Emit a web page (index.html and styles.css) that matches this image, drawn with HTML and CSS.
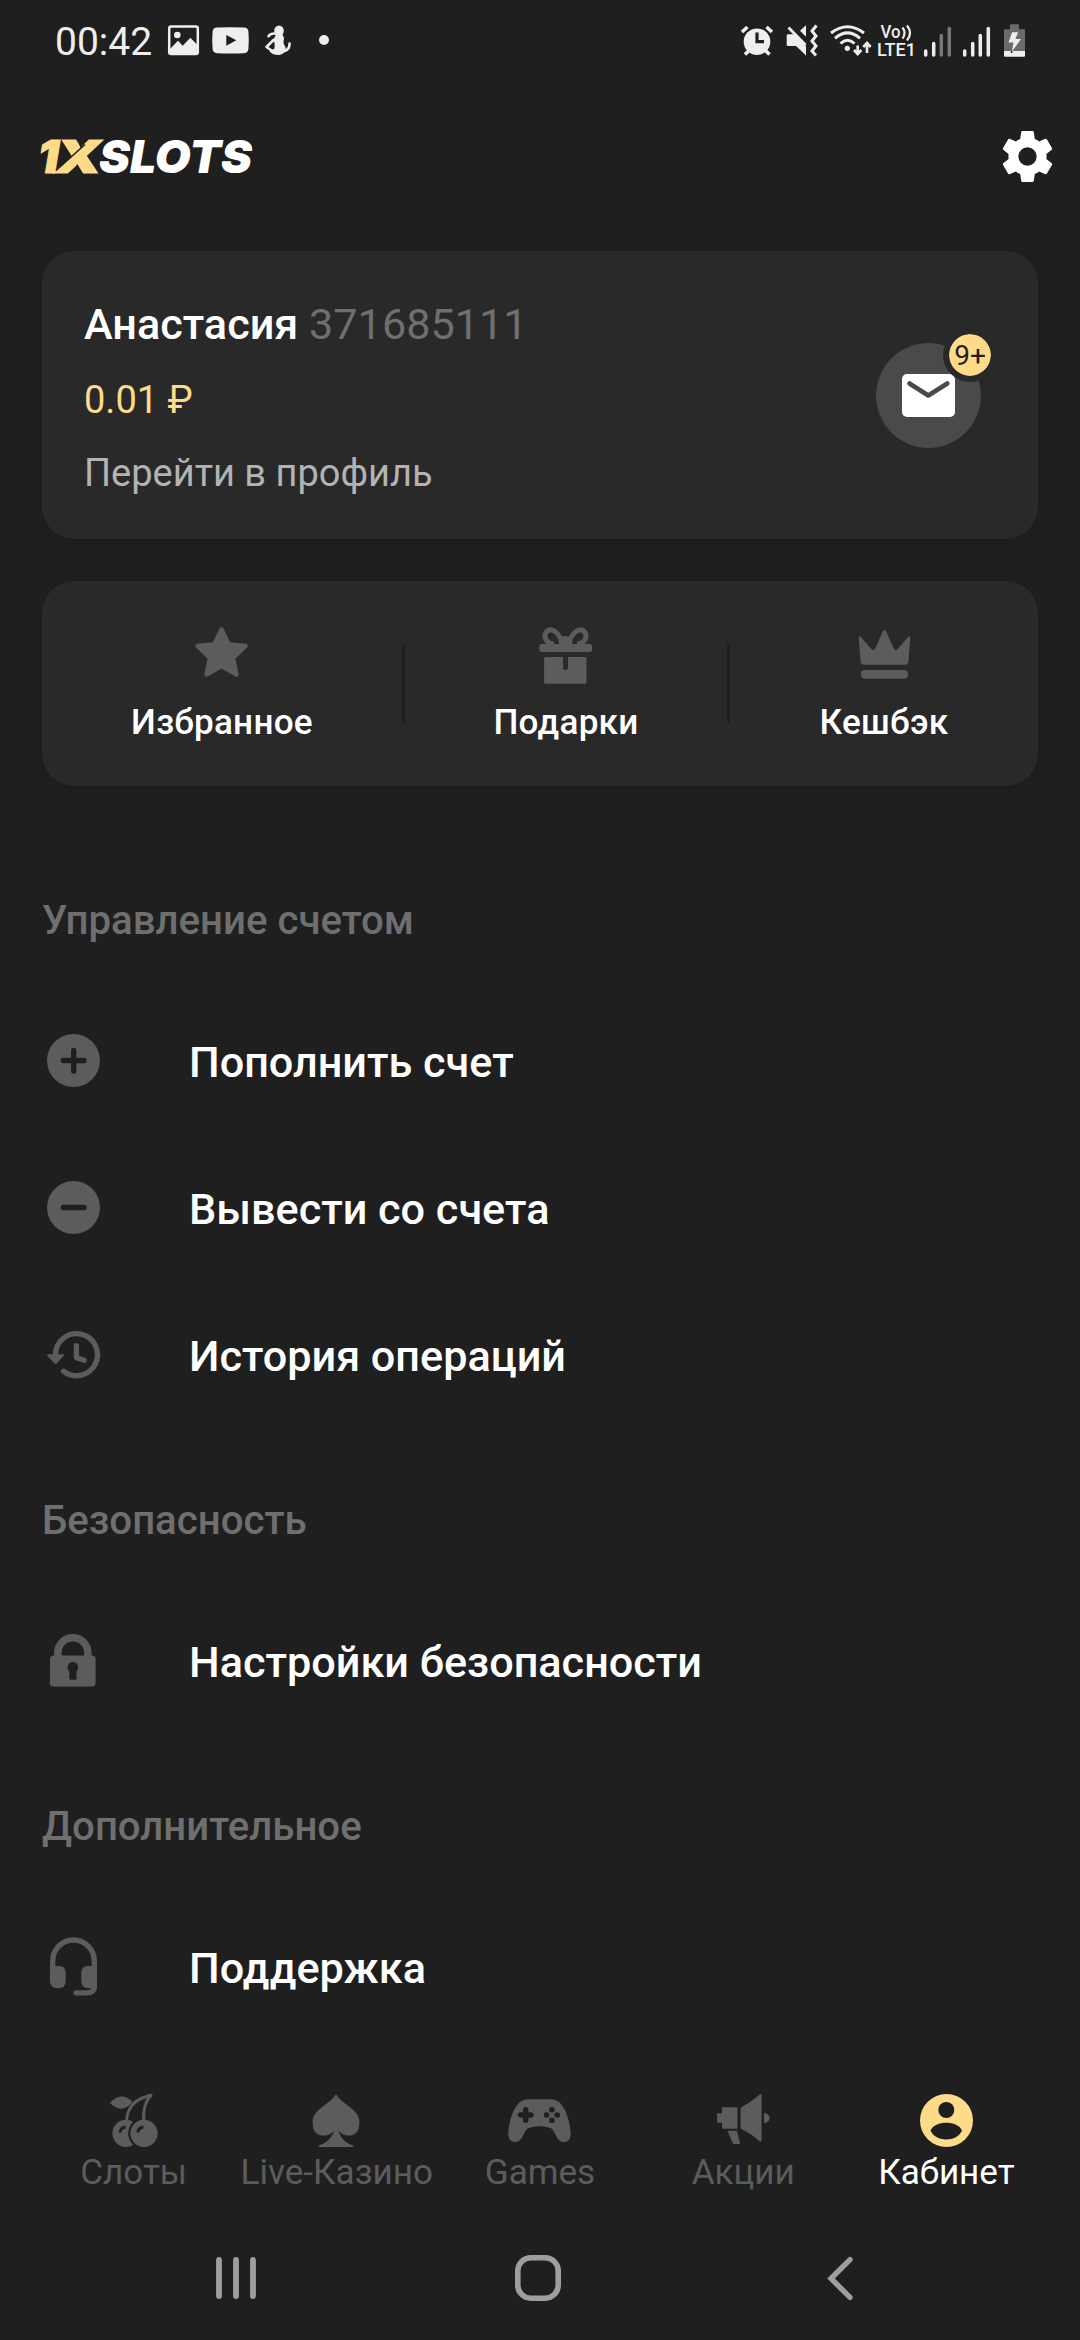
FILE: index.html
```html
<!DOCTYPE html>
<html lang="ru">
<head>
    <meta charset="UTF-8">
    <meta name="viewport" content="width=device-width, initial-scale=1.0">
    <title>1XSLOTS - Кабинет</title>
    <link rel="stylesheet" href="styles.css">
</head>
<body>
    <!-- Status bar -->
    <div class="status-bar">
        <span class="status-time">00:42</span>
        <svg width="44" height="40" viewBox="0 0 44 40">
            <rect x="1.2" y="6.5" width="28.6" height="27.4" rx="2" fill="none" stroke="#eee" stroke-width="2.5"/>
            <circle cx="9.3" cy="15" r="3.3" fill="#eee"/>
            <path d="M2 29 10 20.7l4.7 5 7.6-8L29.5 25v9H2z" fill="#eee"/>
        </svg>
        <svg width="53" height="40" viewBox="0 0 53 40">
            <path d="M5 7.6q13.5-.8 27 0 4 .2 4.4 4 .8 8.7 0 17.4-.4 4-4.4 4.2-13.5.8-27 0-4-.2-4.400-4.2-.8-8.7 0-17.4.4-3.8 4.4-4z" fill="#eee"/>
            <path d="M14.3 15l10 5.300-10 5.400z" fill="#1f1f1f"/>
        </svg>
        <svg width="54" height="40" viewBox="0 0 54 40">
            <ellipse cx="14" cy="11" rx="4.8" ry="5.6" fill="#eee"/>
            <path d="M3.5 16.2Q5.500 13.3 10 13.5" fill="none" stroke="#eee" stroke-width="2.6" stroke-linecap="round"/>
            <path d="M11 14.5h6q3 3 1.5 7-.5 3 2 5.5 1.5 6-6 8-6 .5-10-3.5l5-3q1-4-1-9z" fill="#eee"/>
            <path d="M8.5 20 1.5 27l8 5.500M19.500 31q5.500-2 5-7.500" fill="none" stroke="#eee" stroke-width="2.6" stroke-linecap="round" stroke-linejoin="round"/>
        </svg>
        <svg width="10" height="40" viewBox="0 0 10 40"><circle cx="5" cy="20" r="5" fill="#eee"/></svg>

        <div class="status-right">
            <svg width="45" height="40" viewBox="0 0 45 40">
                <circle cx="17" cy="21.7" r="13.3" fill="#eee"/>
                <path d="M2 12l5.500-5M32 12l-5.500-5M5 34.500 9.500 30M29.500 34.500 25 30" stroke="#eee" stroke-width="3.6"/>
                <path d="M17 12.500v9.200h7" fill="none" stroke="#1f1f1f" stroke-width="3.2"/>
            </svg>
            <svg width="44" height="40" viewBox="0 0 44 40">
                <path d="M3 14.300h6L21 26v9.500L11 26H3q-1.300 0-1.300-1.300v-9q0-1.400 1.300-1.400zM15 10.700l6-5.400v11.400z" fill="#eee"/>
                <path d="M3.500 7.500 20.500 25" stroke="#eee" stroke-width="2.8"/>
                <path d="M31.500 5.500 27 11l4 5-4 5 4 5-4 5 4 4.500" fill="none" stroke="#eee" stroke-width="3"/>
            </svg>
            <svg width="48" height="40" viewBox="0 0 48 40">
                <path d="M2 13Q18.500.4 35 13M6 18.300Q18.500 7.500 31 18.300M11.500 23.500q7-6.500 14 0" fill="none" stroke="#eee" stroke-width="3"/>
                <circle cx="18.3" cy="28.3" r="2.6" fill="#eee"/>
                <path d="M28.700 25.500v8M25 30l3.700 4 3.700-4M38 33V23.500M34.300 27l3.700-4 3.700 4" fill="none" stroke="#eee" stroke-width="2.6"/>
            </svg>
            <svg class="volte" width="46" height="40" viewBox="0 0 46 40">
                <text x="3.5" y="17.5" textLength="20" lengthAdjust="spacingAndGlyphs">Vo</text>
                <text x="0" y="35.8" textLength="39" lengthAdjust="spacingAndGlyphs">LTE1</text>
                <path d="M25.500 7.500q4 5.500 0 11M30 5.500q6 7.500 0 15" fill="none" stroke="#eee" stroke-width="2.2"/>
            </svg>
            <svg width="39" height="40" viewBox="0 0 39 40">
                <path d="M2.700 31v4M10.700 23.500V35" stroke="#eee" stroke-width="3.5" stroke-linecap="round"/>
                <path d="M18.300 15.500V35M26.300 8.500V35" stroke="#777" stroke-width="3.5" stroke-linecap="round"/>
            </svg>
            <svg width="42" height="40" viewBox="0 0 42 40">
                <path d="M2.700 31v4M10.700 23.500V35M18.300 15.500V35M26.300 8.500V35" stroke="#eee" stroke-width="3.5" stroke-linecap="round"/>
            </svg>
            <svg width="22" height="40" viewBox="0 0 22 40">
                <path d="M6 9.300v-4q0-1 1-1h7q1 0 1 1v4h5q1 0 1 1V31H0V10.300q0-1 1-1z" fill="#6b6b6b"/>
                <path d="M0 31h21v4.700q0 1-1 1H1q-1 0-1-1z" fill="#eee"/>
                <path d="M8 12.300h6L11.500 19H17L8 31.500l1.500-9h-5z" fill="#eee"/>
                <circle cx="7.6" cy="32" r="1" fill="#1f1f1f"/>
            </svg>
        </div>
    </div>

    <!-- Header -->
    <div class="header">
        <svg class="logo" width="214" height="34" viewBox="0 0 214 34">
            <text class="logo-accent" transform="translate(-4 32.800) scale(1 0.980)">1</text>
            <text class="logo-accent" transform="translate(13 32.800) scale(1.280 0.980)">X</text>
            <path d="M14 30.500 43 4.500" stroke="#1f1f1f" stroke-width="1.6"/>
            <text x="57" y="33.3" textLength="153" lengthAdjust="spacingAndGlyphs">SLOTS</text>
        </svg>
        <svg class="settings" width="61" height="61" viewBox="0 0 24 24">
            <path fill="#fff" d="M19.430 12.980c.04-.32.07-.64.07-.98s-.03-.66-.07-.98l2.110-1.650c.19-.15.24-.42.12-.64l-2-3.460c-.12-.22-.39-.3-.61-.22l-2.490 1c-.52-.4-1.080-.73-1.690-.98l-.38-2.650C14.460 2.180 14.250 2 14 2h-4c-.25 0-.46.18-.49.42l-.38 2.650c-.61.25-1.170.59-1.690.98l-2.490-1c-.23-.09-.49 0-.61.22l-2 3.460c-.13.22-.07.49.12.64l2.110 1.650c-.04.32-.07.65-.07.98s.03.66.07.98l-2.110 1.650c-.19.15-.24.42-.12.64l2 3.460c.12.22.39.3.61.22l2.490-1c.52.4 1.080.73 1.690.98l.38 2.650c.03.24.24.42.49.42h4c.25 0 .46-.18.49-.42l.38-2.650c.61-.25 1.170-.59 1.690-.98l2.490 1c.23.09.49 0 .61-.22l2-3.460c.12-.22.07-.49-.12-.64l-2.110-1.650zM12 15.600a3.600 3.600 0 1 1 0-7.200 3.600 3.600 0 0 1 0 7.200z"/>
        </svg>
    </div>

    <!-- Profile card -->
    <div class="card profile">
        <div>
            <div class="profile-name">Анастасия <span>371685111</span></div>
            <div class="profile-balance">0.01 ₽</div>
            <div class="profile-link">Перейти в профиль</div>
        </div>
        <div class="mail">
            <svg width="53" height="43" viewBox="0 0 53 43">
                <rect width="53" height="43" rx="5" fill="#fff"/>
                <path d="M7.500 9.500l18.800 12 19-12" fill="none" stroke="#4a4a4a" stroke-width="4.6" stroke-linecap="round" stroke-linejoin="round"/>
            </svg>
            <span class="badge">9+</span>
        </div>
    </div>

    <!-- Quick links -->
    <div class="card quick">
        <div class="quick-item">
            <svg width="60" height="60" viewBox="0 0 60 60">
                <path d="M29.500 5.500l7.300 15 16.700 1.500L41 34l3.500 16.500-15-8.500-15 8.500L18 34 5.500 22l16.700-1.500z" fill="#5c5c5c" stroke="#5c5c5c" stroke-width="4.4" stroke-linejoin="round"/>
            </svg>
            <span>Избранное</span>
        </div>
        <div class="divider"></div>
        <div class="quick-item">
            <svg width="60" height="60" viewBox="0 0 60 60" fill="#5c5c5c">
                <path d="M27 20C21 4 13 4 10 8.500 7.500 13 10 19.500 18 20M32 20C38 4 46 4 49 8.500 51.500 13 49 19.500 41 20" fill="none" stroke="#5c5c5c" stroke-width="5"/>
                <ellipse cx="29.5" cy="17.5" rx="7" ry="5.5"/>
                <rect x="3.3" y="20" width="52.7" height="8" rx="2.5"/>
                <path d="M9.600 33H27v10.500a2.500 2.500 0 0 0 5 0V33h17q1.500 0 1.500 1.500v23.700q0 1.500-1.500 1.500H9.600q-1.500 0-1.500-1.500V34.500q0-1.500 1.500-1.500z"/>
            </svg>
            <span>Подарки</span>
        </div>
        <div class="divider"></div>
        <div class="quick-item">
            <svg width="60" height="60" viewBox="0 0 60 60" fill="#5c5c5c">
                <path d="M7 13 17 24.800q2.700 2.500 4.500-.8L28.800 7.200q1.600-2.400 3.200 0L39.500 24q1.800 3.300 4.500.8L54 13q2.300-2 2.300.8L54.500 37q-.3 3.700-4 3.700h-40q-3.700 0-4-3.700L4.700 13.800Q4.700 11 7 13z"/>
                <rect x="7" y="46" width="47" height="8.7" rx="4"/>
            </svg>
            <span>Кешбэк</span>
        </div>
    </div>

    <!-- Menu -->
    <div class="menu">
        <h2>Управление счетом</h2>
        <div class="menu-item">
            <svg width="53" height="53" viewBox="0 0 53 53">
                <circle cx="26.5" cy="26.5" r="26.5" fill="#5c5c5c"/>
                <path d="M16.300 26.500h20.800M26.700 16.300v20.800" stroke="#1f1f1f" stroke-width="5.3" stroke-linecap="round"/>
            </svg>
            <span>Пополнить счет</span>
        </div>
        <div class="menu-item">
            <svg width="53" height="53" viewBox="0 0 53 53">
                <circle cx="26.5" cy="26.5" r="26.5" fill="#5c5c5c"/>
                <path d="M16.300 26.500h20.800" stroke="#1f1f1f" stroke-width="5.3" stroke-linecap="round"/>
            </svg>
            <span>Вывести со счета</span>
        </div>
        <div class="menu-item">
            <svg width="53" height="53" viewBox="0 0 53 53">
                <path d="M8.500 27A21 21 0 1 1 16.500 43.200M29.400 17.700v12l7.800 2.600" fill="none" stroke="#5c5c5c" stroke-width="5.3" stroke-linecap="round" stroke-linejoin="round"/>
                <path d="M1.200 26.200h14.600q2 0 .8 1.600l-6.800 7.500q-1.300 1.200-2.600 0L.4 27.800q-1.200-1.600.8-1.600z" fill="#5c5c5c"/>
            </svg>
            <span>История операций</span>
        </div>

        <h2>Безопасность</h2>
        <div class="menu-item">
            <svg width="53" height="53" viewBox="0 0 53 53">
                <path d="M10.800 24v-5.300a15 15 0 0 1 30 0V24" fill="none" stroke="#5c5c5c" stroke-width="7.5"/>
                <rect x="3" y="21.6" width="45.6" height="31" rx="3.5" fill="#5c5c5c"/>
                <path d="M22.300 37.200a5.300 5.300 0 1 1 7.200 0v7.500q0 1-1 1h-5.200q-1 0-1-1z" fill="#1f1f1f"/>
            </svg>
            <span>Настройки безопасности</span>
        </div>

        <h2>Дополнительное</h2>
        <div class="menu-item">
            <svg width="53" height="53" viewBox="0 0 53 53">
                <path d="M5.700 32V21a20.800 21 0 0 1 41.600 0v25q0 6.800-6.800 6.800H29" fill="none" stroke="#5c5c5c" stroke-width="5.3" stroke-linecap="round"/>
                <path d="M3 26h9q6.700 0 6.700 6.700v8.500q0 7-7.700 7t-8-7zM50 26h-9q-6.700 0-6.700 6.700v8.500q0 7 7.700 7h8z" fill="#5c5c5c"/>
            </svg>
            <span>Поддержка</span>
        </div>
    </div>

    <!-- Tab bar -->
    <div class="tabs">
        <div class="tab">
            <svg width="53" height="53" viewBox="0 0 53 53" fill="#5c5c5c">
                <path d="M2.900 9Q14-3.300 25.500 7.700 15 21 2.900 9z"/>
                <path d="M19.400 27Q21 5 45 1.500M36.800 27Q35.500 10 44 1.500" fill="none" stroke="#5c5c5c" stroke-width="3"/>
                <path d="M40 0h6l-4 5z"/>
                <circle cx="19" cy="39.3" r="13.6"/>
                <circle cx="37" cy="39.3" r="15.8" fill="#1f1f1f"/>
                <path d="M36.800 28V20" stroke="#5c5c5c" stroke-width="3"/>
                <circle cx="37" cy="39.3" r="13.6"/>
                <path d="M13.200 38.500q.3-5 5.500-5.500M31 38.500q.3-5 5.500-5.500" fill="none" stroke="#1f1f1f" stroke-width="3"/>
            </svg>
            <span>Слоты</span>
        </div>
        <div class="tab">
            <svg width="53" height="53" viewBox="0 0 53 53" fill="#5c5c5c">
                <path d="M26 0C31 10 49.400 15 49.400 27.700 49.400 38 45 41.500 39 41.500c-5 0-8.500-2-10.500-5C30 43.500 36 49.500 43.200 51.500V53H8.800v-1.500C16 49.500 22.500 43.500 24 36.500c-2 3-5.500 5-10.500 5-6.500 0-10.900-3.500-10.900-13.800C2.600 15 21 10 26 0z"/>
            </svg>
            <span>Live-Казино</span>
        </div>
        <div class="tab">
            <svg width="63" height="53" viewBox="0 0 63 53">
                <path d="M20 5.300h23C55 5.300 61 22 62.700 38c.3 8-3.200 10-7.200 10-7.500 0-8-12-13-14Q31.500 30.500 20.500 34c-5 2-5.500 14-13 14-4 0-7.500-2-7.200-10C2 22 8 5.300 20 5.300z" fill="#5c5c5c"/>
                <path d="M12.500 21h10.400M17.700 15.800v10.400" stroke="#1f1f1f" stroke-width="5.5" stroke-linecap="round"/>
                <g fill="#1f1f1f">
                    <circle cx="43.9" cy="15.7" r="2.8"/><circle cx="43.9" cy="26.3" r="2.8"/>
                    <circle cx="38.6" cy="21" r="2.8"/><circle cx="49.2" cy="21" r="2.8"/>
                </g>
            </svg>
            <span>Games</span>
        </div>
        <div class="tab">
            <svg width="53" height="53" viewBox="0 0 53 53" fill="#5c5c5c">
                <path d="M0 20.300q0-1 1-1h4v-5q0-1 1-1h14.500v21.400H6q-1 0-1-1v-5H1q-1 0-1-1zM10.500 36.700H20L23.200 50h-7zM23.600 13.700Q35 7.500 43 .3q1.600-1 1.600 1V46.500q0 2-1.600 1-8-7.200-19.400-13zM47 18.700q5.500 1 5.500 5.200T47 29z"/>
            </svg>
            <span>Акции</span>
        </div>
        <div class="tab active">
            <svg width="53" height="53" viewBox="0 0 53 53">
                <circle cx="26.5" cy="26.5" r="26.5" fill="#fddb88"/>
                <circle cx="26.3" cy="16" r="8" fill="#1f1f1f"/>
                <path d="M10.500 36.500C15 26.200 37.500 26.200 42 36.500 37 48.500 15.500 48.500 10.500 36.500z" fill="#1f1f1f"/>
            </svg>
            <span>Кабинет</span>
        </div>
    </div>

    <!-- System navigation -->
    <div class="nav">
        <svg width="46" height="46" viewBox="0 0 46 46">
            <path d="M6 5v36M23 5v36M40 5v36" stroke="#9e9e9e" stroke-width="5.8" stroke-linecap="round"/>
        </svg>
        <svg width="46" height="46" viewBox="0 0 46 46">
            <rect x="2.8" y="2.8" width="40.4" height="40.4" rx="13" fill="none" stroke="#9e9e9e" stroke-width="5.6"/>
        </svg>
        <svg width="26" height="46" viewBox="0 0 26 46">
            <path d="M23 4.700 4 23.500 23 42.300" fill="none" stroke="#9e9e9e" stroke-width="5.4" stroke-linecap="round"/>
        </svg>
    </div>
</body>
</html>
```
FILE: styles.css
```css
* {
    margin: 0;
    padding: 0;
    box-sizing: border-box;
}
body {
    width: 1080px;
    height: 2340px;
    overflow: hidden;
    background: #1f1f1f;
    color: #fff;
    font-family: Roboto, sans-serif;
}
svg {
    display: block;
    flex-shrink: 0;
    overflow: visible;
}

/* Status bar */
.status-bar {
    display: flex;
    align-items: center;
    height: 80px;
    padding: 0 54px 0 55px;
}
.status-time {
    width: 113px;
    font-size: 39px;
    line-height: 50px;
    padding-top: 4px;
    color: #eee;
}
.status-right {
    display: flex;
    margin-left: auto;
}
.volte text {
    font-size: 17.5px;
    font-weight: 500;
    fill: #eee;
}

/* Header */
.header {
    display: flex;
    justify-content: space-between;
    align-items: center;
    height: 153px;
    padding: 0 22px 0 42px;
}
.logo text {
    font-family: Inter, sans-serif;
    font-size: 46px;
    font-weight: 900;
    font-style: italic;
    fill: #fff;
}
.logo .logo-accent {
    fill: #fddb88;
    stroke: #fddb88;
    stroke-width: 1.2px;
}

/* Cards */
.card {
    margin: 0 42px;
    background: #292929;
    border-radius: 32px;
    box-shadow: 0 2px 6px rgba(0,0,0,0.12);
}
.profile {
    display: flex;
    justify-content: space-between;
    align-items: center;
    height: 288px;
    margin-top: 18px;
    padding: 0 57px 0 42px;
}
.profile-name {
    font-size: 43.2px;
    font-weight: 500;
    line-height: 50px;
}
.profile-name span {
    font-weight: 400;
    color: #6f6f6f;
}
.profile-balance {
    margin: 25px 0 23px;
    font-size: 38px;
    line-height: 50px;
    color: #fddb88;
}
.profile-link {
    font-size: 38px;
    line-height: 50px;
    color: #b3b3b3;
}
.profile > div:first-child {
    padding-top: 7px;
}
.mail {
    position: relative;
    display: flex;
    justify-content: center;
    align-items: center;
    width: 105px;
    height: 105px;
    border-radius: 50%;
    background: #4a4a4a;
}
.badge {
    position: absolute;
    top: -15px;
    left: 67px;
    width: 54px;
    height: 54px;
    border: 6px solid #292929;
    border-radius: 50%;
    background: #fddb88;
    background-clip: padding-box;
    color: #1f1f1f;
    font-size: 28px;
    line-height: 43px;
    text-align: center;
}
.quick {
    display: grid;
    grid-template-columns: 360px 3px 322px 3px 308px;
    height: 205px;
    margin-top: 42px;
}
.quick-item {
    display: flex;
    flex-direction: column;
    align-items: center;
    gap: 17px;
    padding-top: 43px;
    font-size: 35.1px;
    font-weight: 500;
    line-height: 42px;
    letter-spacing: 0.25px;
}
.divider {
    height: 79px;
    margin-top: 63px;
    background: #1f1f1f;
}

/* Menu */
.menu {
    padding: 42px 42px 0;
}
.menu h2 {
    height: 133px;
    margin-top: 26px;
    font-size: 40.2px;
    font-weight: 500;
    line-height: 133px;
    color: #6f6f6f;
}
.menu-item {
    display: flex;
    align-items: center;
    height: 147px;
    padding-left: 5px;
    gap: 89px;
    font-size: 43.2px;
    font-weight: 500;
}
.menu-item span {
    padding-top: 4px;
}

/* Tab bar */
.tabs {
    display: grid;
    grid-template-columns: repeat(5, 1fr);
    height: 168px;
    padding: 54px 32px 0;
}
.tab {
    display: flex;
    flex-direction: column;
    align-items: center;
    gap: 4px;
    font-size: 35.1px;
    line-height: 42px;
    color: #5c5c5c;
    white-space: nowrap;
}
.tab.active {
    color: #fff;
}

/* System navigation */
.nav {
    display: grid;
    grid-template-columns: repeat(3, 302px);
    justify-items: center;
    padding: 47px 0 0 85px;
}
```
